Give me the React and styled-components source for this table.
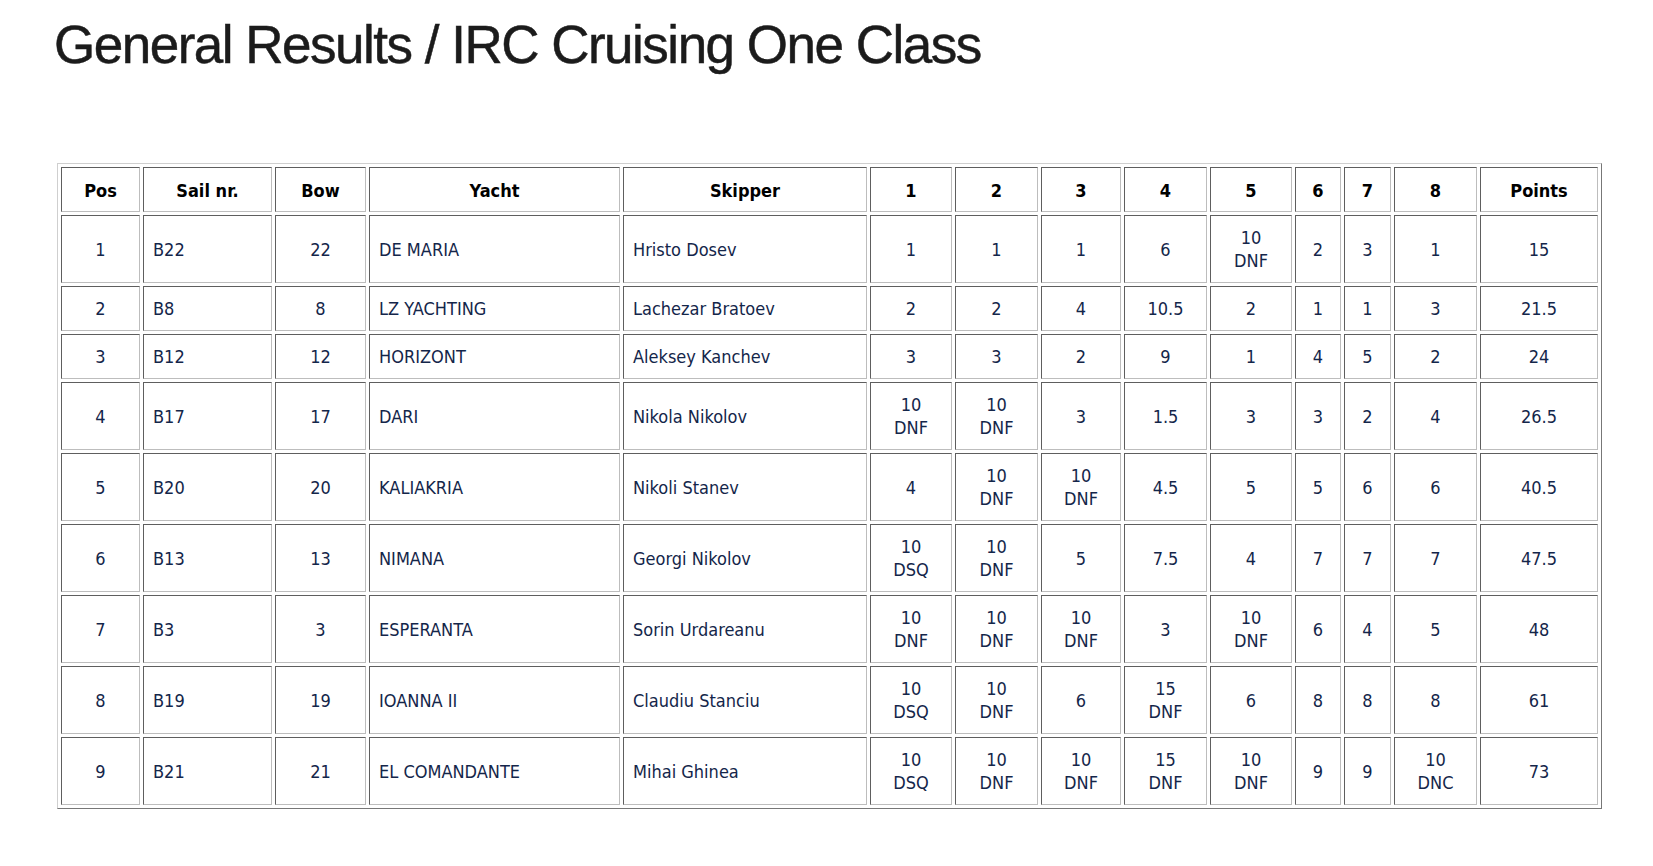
import React from 'react';
import styled, { createGlobalStyle } from 'styled-components';

const GlobalStyle = createGlobalStyle`
  html, body {
    margin: 0;
    padding: 0;
    background: #fff;
  }
`;

const columns = [
  { label: 'Pos', width: 79, align: 'center' },
  { label: 'Sail nr.', width: 129, align: 'left' },
  { label: 'Bow', width: 91, align: 'center' },
  { label: 'Yacht', width: 251, align: 'left' },
  { label: 'Skipper', width: 244, align: 'left' },
  { label: '1', width: 82, align: 'center' },
  { label: '2', width: 83, align: 'center' },
  { label: '3', width: 80, align: 'center' },
  { label: '4', width: 83, align: 'center' },
  { label: '5', width: 82, align: 'center' },
  { label: '6', width: 46, align: 'center' },
  { label: '7', width: 47, align: 'center' },
  { label: '8', width: 83, align: 'center' },
  { label: 'Points', width: 118, align: 'center' },
];

// "10 DNF" style scores break onto two lines
const results = [
  ['1', 'B22', '22', 'DE MARIA', 'Hristo Dosev', '1', '1', '1', '6', '10 DNF', '2', '3', '1', '15'],
  ['2', 'B8', '8', 'LZ YACHTING', 'Lachezar Bratoev', '2', '2', '4', '10.5', '2', '1', '1', '3', '21.5'],
  ['3', 'B12', '12', 'HORIZONT', 'Aleksey Kanchev', '3', '3', '2', '9', '1', '4', '5', '2', '24'],
  ['4', 'B17', '17', 'DARI', 'Nikola Nikolov', '10 DNF', '10 DNF', '3', '1.5', '3', '3', '2', '4', '26.5'],
  ['5', 'B20', '20', 'KALIAKRIA', 'Nikoli Stanev', '4', '10 DNF', '10 DNF', '4.5', '5', '5', '6', '6', '40.5'],
  ['6', 'B13', '13', 'NIMANA', 'Georgi Nikolov', '10 DSQ', '10 DNF', '5', '7.5', '4', '7', '7', '7', '47.5'],
  ['7', 'B3', '3', 'ESPERANTA', 'Sorin Urdareanu', '10 DNF', '10 DNF', '10 DNF', '3', '10 DNF', '6', '4', '5', '48'],
  ['8', 'B19', '19', 'IOANNA II', 'Claudiu Stanciu', '10 DSQ', '10 DNF', '6', '15 DNF', '6', '8', '8', '8', '61'],
  ['9', 'B21', '21', 'EL COMANDANTE', 'Mihai Ghinea', '10 DSQ', '10 DNF', '10 DNF', '15 DNF', '10 DNF', '9', '9', '10 DNC', '73'],
];

const ResultsPage = () => {
  return (
    <Page>
      <GlobalStyle />
      <Title>General Results / IRC Cruising One Class</Title>
      <Table>
        <colgroup>
          {columns.map((c, i) => (
            <col key={i} style={{ width: c.width }} />
          ))}
        </colgroup>
        <thead>
          <tr>
            {columns.map((c) => (
              <HeadCell key={c.label}>{c.label}</HeadCell>
            ))}
          </tr>
        </thead>
        <tbody>
          {results.map((row) => (
            <tr key={row[0]}>
              {row.map((value, i) => {
                const [score, code] = value.split(' ');
                const isScore = i > 4;
                return (
                  <Cell key={i} $align={columns[i].align}>
                    {isScore && code ? (
                      <>
                        {score}
                        <br />
                        {code}
                      </>
                    ) : (
                      value
                    )}
                  </Cell>
                );
              })}
            </tr>
          ))}
        </tbody>
      </Table>
    </Page>
  );
};

const Page = styled.div`
  padding: 11px 0 40px 54px;
`;

const Title = styled.h1`
  margin: 0;
  font-family: 'Liberation Sans', Arial, Helvetica, sans-serif;
  font-weight: 400;
  font-size: 53px;
  line-height: 68px;
  letter-spacing: -1.5px;
  color: #1b1b1b;
  -webkit-text-stroke: 0.5px #1b1b1b;
`;

const Table = styled.table`
  margin: 84px 0 0 3px;
  width: 1545px;
  table-layout: fixed;
  border-collapse: separate;
  border-spacing: 3px;
  border: 1px solid;
  border-color: #cfcfcf #777 #777 #cfcfcf;
  font-family: 'DejaVu Sans Condensed', 'DejaVu Sans', Verdana, sans-serif;
  font-stretch: condensed;
  font-size: 18px;
  line-height: 23px;
`;

const HeadCell = styled.th`
  padding: 11px 4px 9px;
  border: 1px solid;
  border-color: #5e5e5e #bdbdbd #bdbdbd #5e5e5e;
  text-align: center;
  font-weight: 700;
  color: #000;
  white-space: nowrap;
`;

const Cell = styled.td`
  padding: 10px 4px 10px ${(p) => (p.$align === 'left' ? '9px' : '4px')};
  border: 1px solid;
  border-color: #5e5e5e #bdbdbd #bdbdbd #5e5e5e;
  text-align: ${(p) => p.$align};
  vertical-align: middle;
  color: #14264a;
  white-space: nowrap;
`;

export default ResultsPage;
